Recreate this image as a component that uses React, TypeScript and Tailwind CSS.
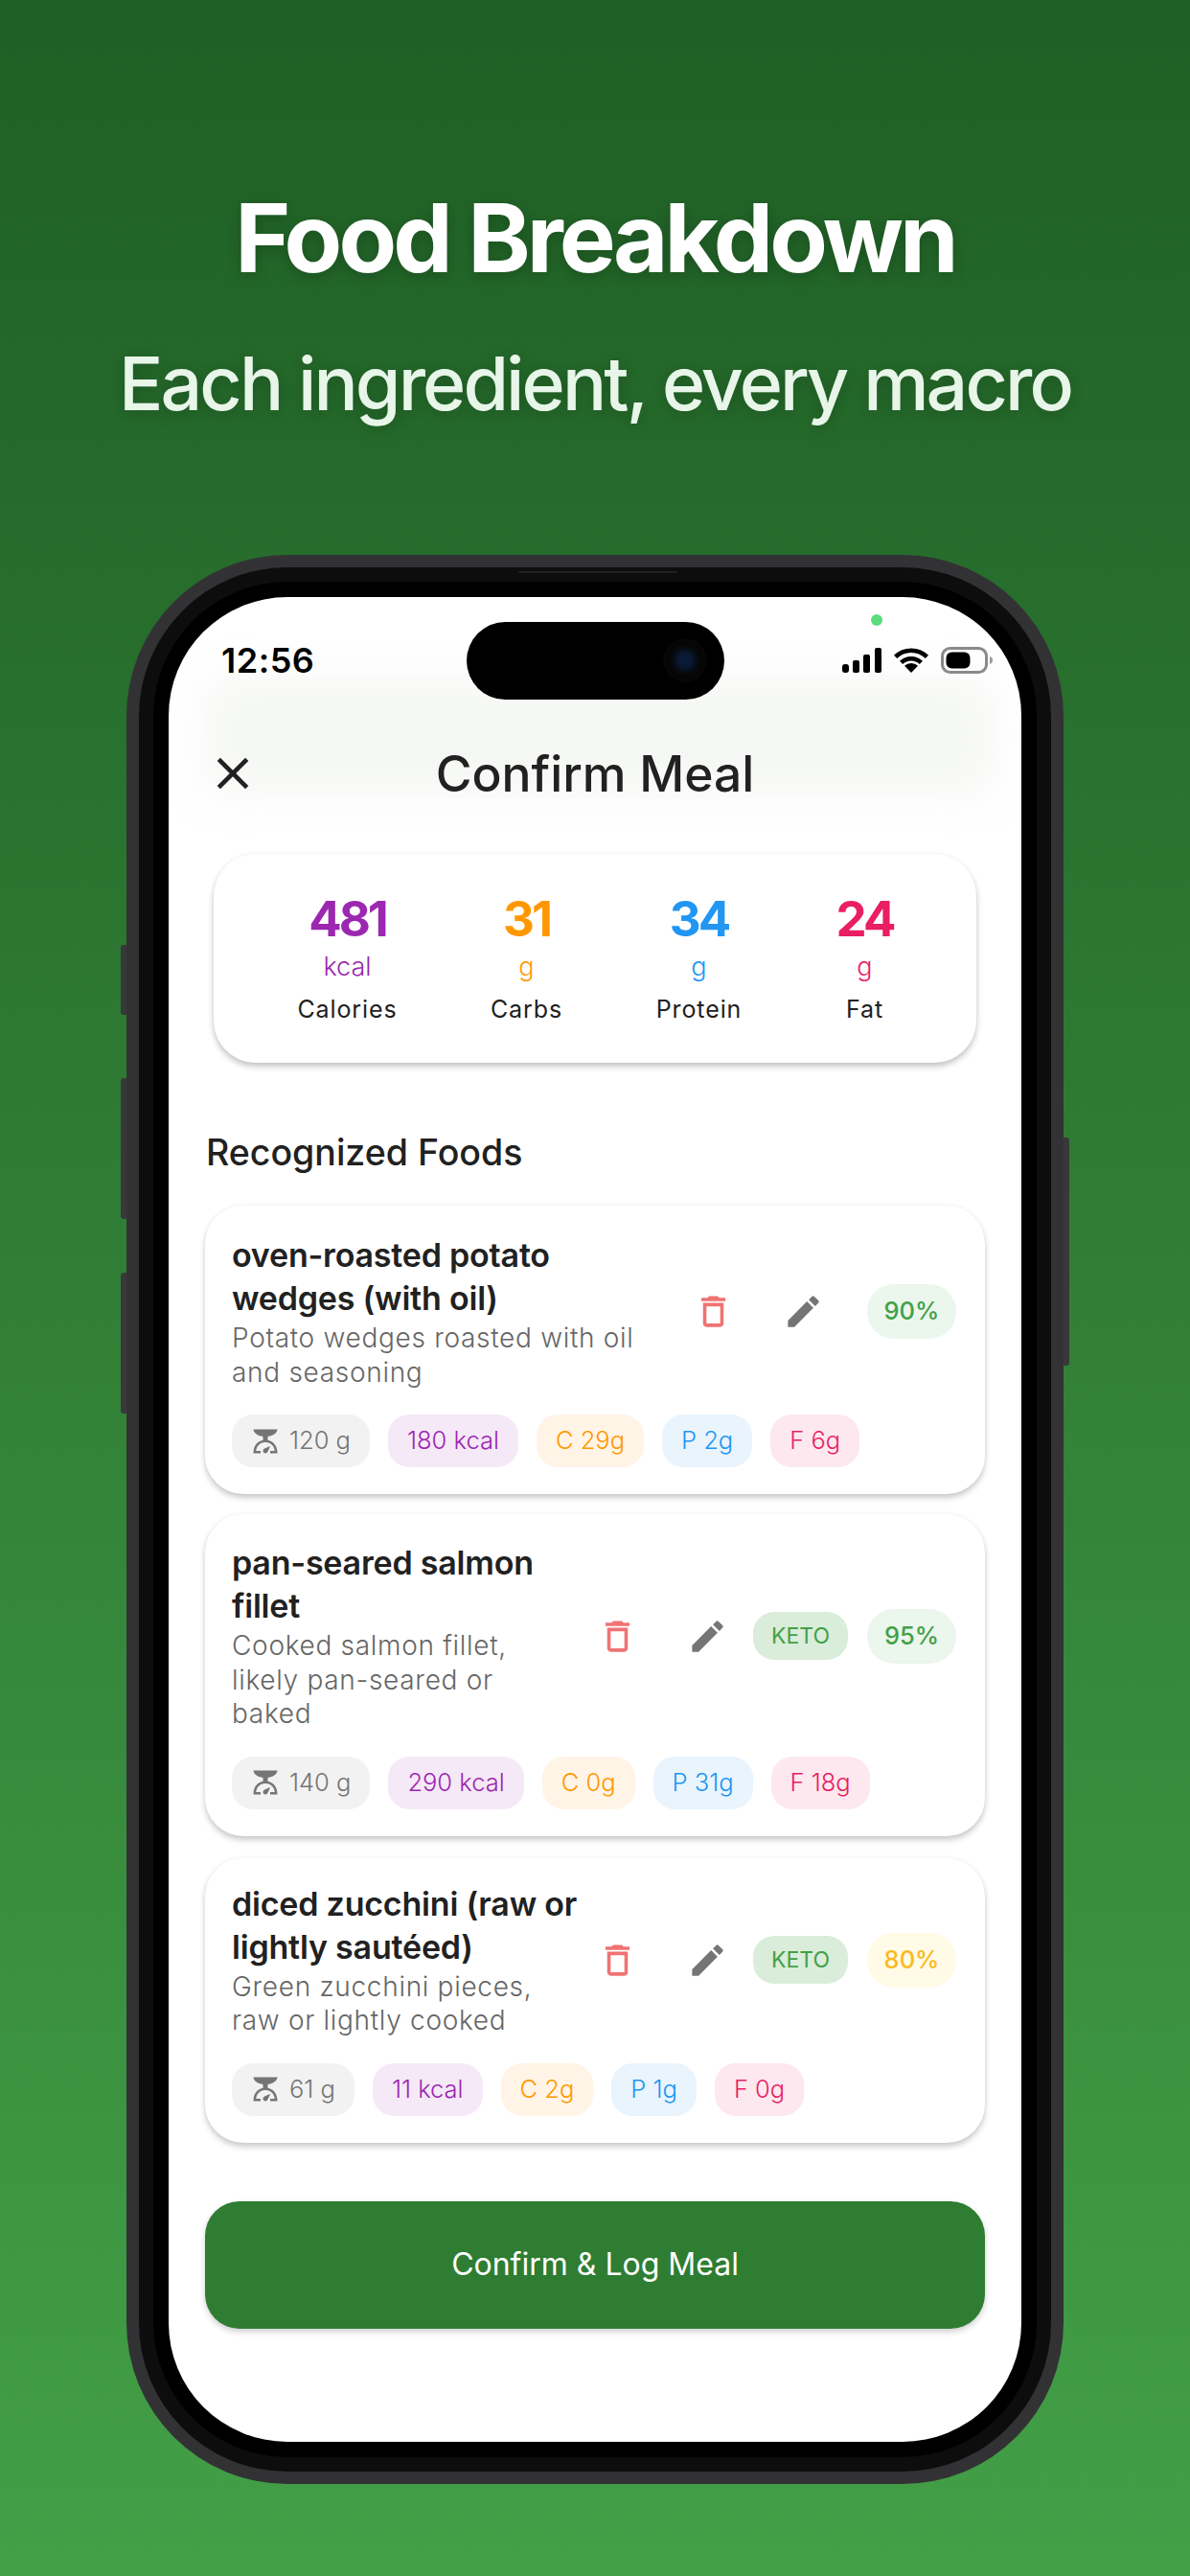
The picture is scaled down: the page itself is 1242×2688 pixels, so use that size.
const macroStyles = {
  kcal: "bg-[#f5e9f7] text-[#9c27b0]",
  carbs: "bg-[#fff4e6] text-[#ff9800]",
  protein: "bg-[#e9f4fd] text-[#2196f3]",
  fat: "bg-[#fde8ef] text-[#e91e63]",
};

const summary = [
  { value: "481", unit: "kcal", label: "Calories", color: "text-[#9c27b0]", w: "w-[187px]" },
  { value: "31", unit: "g", label: "Carbs", color: "text-[#ff9800]", w: "w-[187px]" },
  { value: "34", unit: "g", label: "Protein", color: "text-[#2196f3]", w: "w-[173px]" },
  { value: "24", unit: "g", label: "Fat", color: "text-[#e91e63]", w: "w-[173px]" },
];

const foods = [
  {
    name: ["oven-roasted potato", "wedges (with oil)"],
    desc: ["Potato wedges roasted with oil", "and seasoning"],
    keto: false,
    pct: "90%",
    pctStyle: "bg-[#ebf6ec] text-[#43a047]",
    weight: "120 g",
    macros: ["180 kcal", "C 29g", "P 2g", "F 6g"],
    spacing: "mt-0 pt-[29px]",
  },
  {
    name: ["pan-seared salmon", "fillet"],
    desc: ["Cooked salmon fillet,", "likely pan-seared or", "baked"],
    keto: true,
    pct: "95%",
    pctStyle: "bg-[#ebf6ec] text-[#43a047]",
    weight: "140 g",
    macros: ["290 kcal", "C 0g", "P 31g", "F 18g"],
    spacing: "mt-[21px] pt-[28px]",
  },
  {
    name: ["diced zucchini (raw or", "lightly sautéed)"],
    desc: ["Green zucchini pieces,", "raw or lightly cooked"],
    keto: true,
    pct: "80%",
    pctStyle: "bg-[#fffbe6] text-[#fbb91f]",
    weight: "61 g",
    macros: ["11 kcal", "C 2g", "P 1g", "F 0g"],
    spacing: "mt-[23px] pt-[25px]",
  },
];

const macroKeys = ["kcal", "carbs", "protein", "fat"] as const;

function TrashIcon() {
  return (
    <svg viewBox="0 0 24 24" className="w-[43px] h-[43px]" fill="#ef7373">
      <path d="M6 19c0 1.1.9 2 2 2h8c1.1 0 2-.9 2-2V7H6v12zM8 9h8v10H8V9zm7.5-5l-1-1h-5l-1 1H5v2h14V4h-3.5z" />
    </svg>
  );
}

function PencilIcon() {
  return (
    <svg viewBox="0 0 24 24" className="w-[43px] h-[43px]" fill="#757575">
      <path d="M3 17.25V21h3.75L17.81 9.94l-3.75-3.75L3 17.25zM20.71 7.04c.39-.39.39-1.02 0-1.41l-2.34-2.34c-.39-.39-1.02-.39-1.41 0l-1.83 1.83 3.75 3.75 1.83-1.83z" />
    </svg>
  );
}

function ScaleIcon() {
  return (
    <svg viewBox="0 0 24 24" className="w-[30px] h-[30px]" fill="#757575">
      <path d="M14 11V8c4.56-.58 8-3.1 8-6H2c0 2.9 3.44 5.42 8 6v3c-3.68.73-8 3.61-8 11h6v-2H4.13c.93-6.83 6.65-7.2 7.87-7.2s6.94.37 7.87 7.2H16v2h6c0-7.39-4.32-10.27-8-11zm-2 11c-1.1 0-2-.9-2-2 0-.55.22-1.05.59-1.41C11.39 17.79 16 16 16 16s-1.79 4.61-2.59 5.41c-.36.37-.86.59-1.41.59z" />
    </svg>
  );
}

function StatusIcons() {
  return (
    <div className="flex items-center gap-[13px]">
      <svg viewBox="0 0 41 26" className="w-[41px] h-[26px]" fill="#000">
        <rect x="0" y="17" width="7" height="9" rx="3" />
        <rect x="11" y="13" width="7" height="13" rx="2" />
        <rect x="22" y="7" width="7" height="19" rx="2" />
        <rect x="34" y="0" width="7" height="26" rx="2" />
      </svg>
      <svg viewBox="0 0 36 26" className="w-[36px] h-[26px]" fill="none" stroke="#000" strokeWidth="4.6">
        <path d="M1.6 9.4a23.5 23.5 0 0 1 32.8 0" />
        <path d="M7.6 15.4a15 15 0 0 1 20.8 0" />
        <path d="M18 26l-7-7.2a10 10 0 0 1 14 0z" fill="#000" stroke="none" />
      </svg>
      <svg viewBox="0 0 54 28" className="w-[54px] h-[28px]">
        <rect x="1.5" y="1.5" width="46" height="25" rx="8" fill="none" stroke="#8a8a8a" strokeWidth="3" />
        <rect x="5.5" y="5.5" width="25" height="17" rx="6" fill="#000" />
        <path d="M51 10c2 .6 3 2.2 3 4s-1 3.4-3 4z" fill="#9a9a9a" />
      </svg>
    </div>
  );
}

export default function App() {
  return (
    <div className="w-[1242px] h-[2688px] overflow-hidden flex flex-col items-center bg-gradient-to-b from-[#1f5f25] to-[#43a047] font-['Inter',sans-serif]">
      <h1 className="mt-[193px] text-[99px] leading-[110px] font-bold text-white tracking-[-3.9px] [text-shadow:0_4px_16px_rgba(0,0,0,0.22)]">
        Food Breakdown
      </h1>
      <p className="mt-[51px] text-[77px] leading-[92px] font-medium text-[#e8f5e9] tracking-[-2.9px] [text-shadow:0_4px_16px_rgba(0,0,0,0.22)]">
        Each ingredient, every macro
      </p>

      {/* Phone */}
      <div className="relative mt-[133px] w-[978px] h-[2013px] rounded-[168px] bg-[#323234] p-[13px] shrink-0">
        <div className="absolute -left-[6px] top-[407px] w-[6px] h-[73px] rounded-l-[3px] bg-[#38383a]" />
        <div className="absolute -left-[6px] top-[546px] w-[6px] h-[147px] rounded-l-[3px] bg-[#38383a]" />
        <div className="absolute -left-[6px] top-[749px] w-[6px] h-[147px] rounded-l-[3px] bg-[#38383a]" />
        <div className="absolute -right-[6px] top-[608px] w-[6px] h-[238px] rounded-r-[3px] bg-[#38383a]" />
        <div className="w-full h-full rounded-[155px] bg-[#0d0d0d] p-[15px]">
          <div className="relative w-full h-full rounded-[140px] bg-black p-[16px]">
            <div className="absolute left-[381px] top-[-11px] w-[166px] h-[2px] rounded-full bg-[#222224]" />
            <div className="relative w-full h-full rounded-[124px] bg-white overflow-hidden flex flex-col">
              <div className="absolute left-[39px] right-[30px] top-[85px] h-[120px] bg-[#eef2ec] opacity-60 blur-xl" />
              <div className="absolute left-[311px] top-[26px] w-[269px] h-[81px] rounded-[41px] bg-black">
                <div className="absolute right-[18px] top-[17px] w-[46px] h-[46px] rounded-full bg-[#060606] flex items-center justify-center">
                  <div className="w-[22px] h-[22px] rounded-full bg-[#0a1b38] blur-[3px]" />
                </div>
              </div>
              <div className="absolute left-[733px] top-[18px] w-[12px] h-[12px] rounded-full bg-[#5ddb7f]" />

              <div className="relative flex items-center justify-between pl-[55px] pr-[30px] pt-[31px] h-[100px]">
                <span className="text-[36px] font-semibold text-black tracking-[0.5px]">12:56</span>
                <StatusIcons />
              </div>

              <div className="relative mt-[51px] flex items-center justify-center h-[66px]">
                <svg viewBox="0 0 24 24" className="absolute left-[39px] top-[5px] w-[56px] h-[56px]" fill="#212121">
                  <path d="M19 6.41 17.59 5 12 10.59 6.41 5 5 6.41 10.59 12 5 17.59 6.41 19 12 13.41 17.59 19 19 17.59 13.41 12z" />
                </svg>
                <span className="text-[51.5px] leading-[66px] font-medium text-[#212121]">Confirm Meal</span>
              </div>

              {/* Summary */}
              <div className="relative mt-[51px] mx-[47px] h-[218px] rounded-[44px] bg-white shadow-[0_4px_6px_rgba(0,0,0,0.22),0_0_6px_rgba(0,0,0,0.04)] flex justify-center pl-[16px] pt-[40px]">
                {summary.map((s) => (
                  <div key={s.label} className={`${s.w} flex flex-col items-center`}>
                    <span className={`text-[51px] leading-[56px] font-bold tracking-[-3px] ${s.color}`}>{s.value}</span>
                    <span className={`mt-[4px] text-[27px] leading-[36px] font-light ${s.color}`}>{s.unit}</span>
                    <span className="mt-[8px] text-[25px] leading-[36px] text-[#212121] tracking-[0.9px]">{s.label}</span>
                  </div>
                ))}
              </div>

              <h2 className="mt-[71px] ml-[39px] text-[37.5px] leading-[46px] font-medium text-[#212121]">Recognized Foods</h2>

              {/* Foods */}
              <div className="mt-[32px] mx-[38px] flex flex-col">
                {foods.map((food) => (
                  <div key={food.pct} className={`${food.spacing} rounded-[40px] bg-white shadow-[0_4px_6px_rgba(0,0,0,0.2),0_0_6px_rgba(0,0,0,0.04)] px-[28px] pb-[28px]`}>
                    <div className="flex items-center">
                      <div className="flex-1 min-w-0">
                        {food.name.map((line) => (
                          <div key={line} className="text-[34px] leading-[45px] font-semibold text-[#212121] tracking-[-0.2px] whitespace-nowrap">{line}</div>
                        ))}
                        <div className="mt-[2px]">
                          {food.desc.map((line) => (
                            <div key={line} className="text-[28px] leading-[35.5px] font-light text-[#666] tracking-[0.7px] whitespace-nowrap">{line}</div>
                          ))}
                        </div>
                      </div>
                      <div className="w-[94px] flex justify-center"><TrashIcon /></div>
                      <div className="w-[94px] flex justify-center"><PencilIcon /></div>
                      {food.keto && (
                        <span className="ml-[1px] h-[50px] w-[99px] rounded-[22px] bg-[#d9edda] text-[#43a047] text-[23px] flex items-center justify-center">KETO</span>
                      )}
                      <span className={`ml-[20px] mr-[2px] h-[57px] w-[93px] rounded-[28px] ${food.pctStyle} text-[25.5px] font-medium flex items-center justify-center`}>
                        {food.pct}
                      </span>
                    </div>
                    <div className="mt-[26px] flex gap-[19px]">
                      <span className="h-[55px] px-[20px] rounded-[22px] bg-[#f2f2f2] text-[#757575] text-[25.5px] font-light flex items-center gap-[10px]">
                        <ScaleIcon />
                        {food.weight}
                      </span>
                      {food.macros.map((m, i) => (
                        <span key={m} className={`h-[55px] px-[20px] rounded-[22px] text-[25.5px] font-light flex items-center ${macroStyles[macroKeys[i]]}`}>
                          {m}
                        </span>
                      ))}
                    </div>
                  </div>
                ))}
              </div>

              <button className="mt-[61px] mx-[38px] h-[133px] rounded-[36px] bg-[#2e7d32] text-white text-[32px] shadow-[0_3px_6px_rgba(0,0,0,0.2)] shrink-0">
                Confirm &amp; Log Meal
              </button>
            </div>
          </div>
        </div>
      </div>
    </div>
  );
}
